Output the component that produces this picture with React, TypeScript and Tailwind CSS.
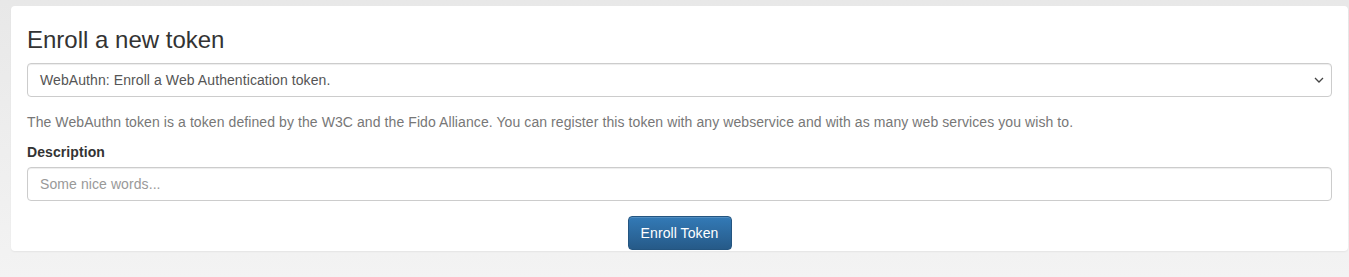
import React from "react";

export default function App() {
  return (
    <div
      className="min-h-[277px] w-full bg-gradient-to-b from-[#e8e8e8] to-[#f3f3f3] pl-[11px] pr-[1px] pt-[6px] text-[14px] leading-[20px] tracking-[0.085px] text-[#333]"
      style={{ fontFamily: '"Liberation Sans", Arial, Helvetica, sans-serif' }}
    >
      <div className="rounded-[4px] bg-white px-4 shadow-[0_1px_2px_rgba(0,0,0,0.06)]">
        <h3 className="pt-[21px] text-[24px] font-normal leading-[26.4px] tracking-normal text-[#333]">
          Enroll a new token
        </h3>
        <div className="mt-[10px] mb-[15px] flex h-[34px] items-center justify-between rounded-[4px] border border-[#ccc] bg-white pl-3 pr-[7px] text-[#555] shadow-[inset_0_1px_1px_rgba(0,0,0,0.075)]">
          <span>WebAuthn: Enroll a Web Authentication token.</span>
          <svg width="10" height="6" viewBox="0 0 10 6" fill="none">
            <path d="M1 1l4 4 4-4" stroke="#444" strokeWidth="1.3" />
          </svg>
        </div>
        <p className="mb-[10px] text-[#777]">
          The WebAuthn token is a token defined by the W3C and the Fido Alliance. You can register this token with any webservice and with as many web services you wish to.
        </p>
        <label className="mb-[5px] block font-bold text-[#333]">Description</label>
        <div className="mb-[15px] flex h-[34px] items-center rounded-[4px] border border-[#ccc] bg-white px-3 text-[#999] shadow-[inset_0_1px_1px_rgba(0,0,0,0.075)]">
          Some nice words...
        </div>
        <div className="flex justify-center">
          <button className="h-[34px] w-[104px] rounded-[4px] border border-[#245580] bg-gradient-to-b from-[#337ab7] to-[#265a88] text-white shadow-[inset_0_1px_0_rgba(255,255,255,0.15)]">
            Enroll Token
          </button>
        </div>
        <div className="h-[1px]" />
      </div>
    </div>
  );
}
